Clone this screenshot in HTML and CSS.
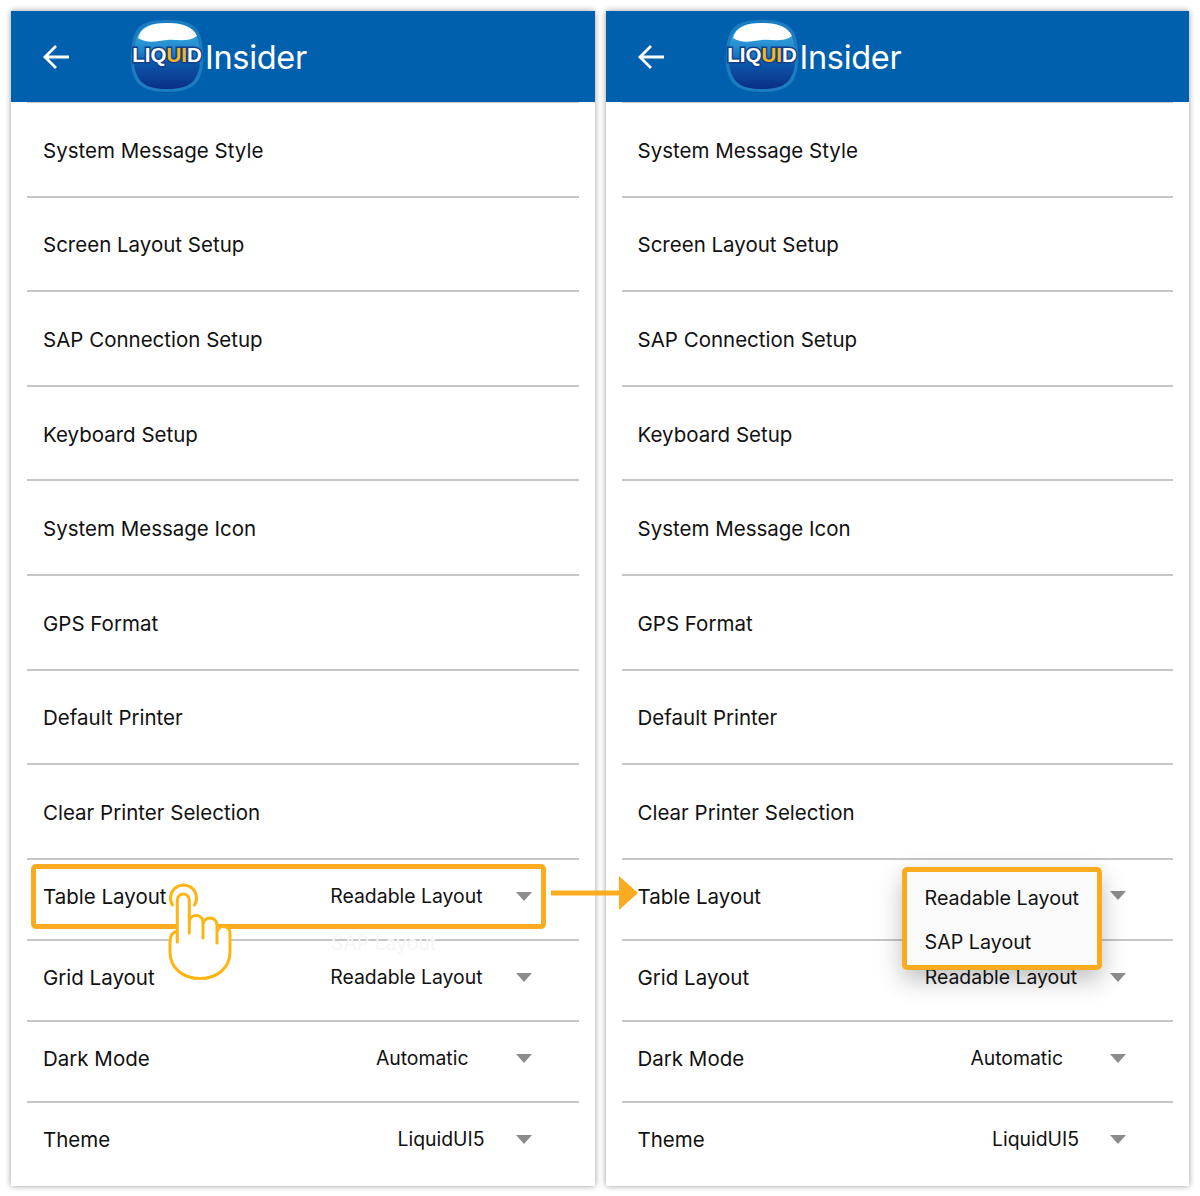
FILE: index.html
```html
<!DOCTYPE html>
<html lang="en">
<head>
  <meta charset="UTF-8">
  <meta name="viewport" content="width=device-width, initial-scale=1.0">
  <title>Liquid Insider Settings</title>
  <link rel="stylesheet" href="styles.css">
</head>
<body>
  <svg class="defs" width="0" height="0">
    <defs>
      <linearGradient id="blobFill" x1="0" y1="0" x2="0" y2="1">
        <stop offset="0" stop-color="#45b4e6"/>
        <stop offset="0.42" stop-color="#1e86cc"/>
        <stop offset="0.62" stop-color="#0c56a8"/>
        <stop offset="1" stop-color="#0a2f86"/>
      </linearGradient>
      <symbol id="logo" viewBox="0 0 76 74">
        <path d="M38 1C60 1 70 6 73 24C75 38 75 50 70 60C65 70 52 73 38 73C24 73 11 70 6 60C1 50 1 38 3 24C6 6 16 1 38 1Z" fill="#1b7cc0"/>
        <path d="M38 4C58 4 67 9 70 25C72 38 72 49 67 58C62 68 51 70 38 70C25 70 14 68 9 58C4 49 4 38 6 25C9 9 18 4 38 4Z" fill="url(#blobFill)"/>
        <path d="M9 19C12 8 22 4 38 4C54 4 64 8 68 17C58 24 48 20 38 21C28 22 18 25 9 19Z" fill="#fff"/>
        <text class="logo-text" x="38" y="43" text-anchor="middle">LIQ<tspan class="logo-ui">UI</tspan>D</text>
      </symbol>
      <symbol id="caret" viewBox="0 0 16 9">
        <path d="M0 0H16L8 9Z" fill="#8c8c8c"/>
      </symbol>
      <symbol id="back" viewBox="0 0 28 26">
        <path d="M26 13H3M13 2L2 13L13 24" fill="none" stroke="#fff" stroke-width="2.8"/>
      </symbol>
    </defs>
  </svg>

  <main class="page">
    <section class="screen">
      <header class="topbar">
        <svg class="back"><use href="#back"/></svg>
        <svg class="logo"><use href="#logo"/></svg>
        <span class="brand">Insider</span>
      </header>
      <ul class="menu">
        <li class="row">System Message Style</li>
        <li class="row">Screen Layout Setup</li>
        <li class="row">SAP Connection Setup</li>
        <li class="row">Keyboard Setup</li>
        <li class="row">System Message Icon</li>
        <li class="row">GPS Format</li>
        <li class="row">Default Printer</li>
        <li class="row">Clear Printer Selection</li>
        <li class="row row-select"><span>Table Layout</span><span class="value val-layout">Readable Layout</span><svg class="caret"><use href="#caret"/></svg></li>
        <li class="row row-select"><span>Grid Layout</span><span class="value val-layout">Readable Layout</span><svg class="caret"><use href="#caret"/></svg></li>
        <li class="row row-select"><span>Dark Mode</span><span class="value val-auto">Automatic</span><svg class="caret"><use href="#caret"/></svg></li>
        <li class="row row-select"><span>Theme</span><span class="value val-theme">LiquidUI5</span><svg class="caret"><use href="#caret"/></svg></li>
      </ul>
      <div class="highlight-row"></div>
      <div class="ghost-option">SAP Layout</div>
      <svg class="hand" viewBox="0 0 72 106">
        <path class="hand-ring" d="M7.500 25A13 13 0 1 1 29.500 25"/>
        <path class="hand-body" d="M12.300 51V20A6 6 0 0 1 24.300 20V53V41A7 7 0 0 1 38 41V58V45A7 7 0 0 1 52 45V63V53A6.500 6.500 0 0 1 65 53V72C65 88 52 98.500 35 98.500C18 98.500 5 88 5 72V62C5 56 8 52 12.300 51V62"/>
      </svg>
    </section>

    <section class="screen">
      <header class="topbar">
        <svg class="back"><use href="#back"/></svg>
        <svg class="logo"><use href="#logo"/></svg>
        <span class="brand">Insider</span>
      </header>
      <ul class="menu">
        <li class="row">System Message Style</li>
        <li class="row">Screen Layout Setup</li>
        <li class="row">SAP Connection Setup</li>
        <li class="row">Keyboard Setup</li>
        <li class="row">System Message Icon</li>
        <li class="row">GPS Format</li>
        <li class="row">Default Printer</li>
        <li class="row">Clear Printer Selection</li>
        <li class="row row-select"><span>Table Layout</span></li>
        <li class="row row-select"><span>Grid Layout</span><span class="value val-layout">Readable Layout</span><svg class="caret"><use href="#caret"/></svg></li>
        <li class="row row-select"><span>Dark Mode</span><span class="value val-auto">Automatic</span><svg class="caret"><use href="#caret"/></svg></li>
        <li class="row row-select"><span>Theme</span><span class="value val-theme">LiquidUI5</span><svg class="caret"><use href="#caret"/></svg></li>
      </ul>
      <svg class="caret caret-open"><use href="#caret"/></svg>
      <div class="dropdown">
        <div class="option">Readable Layout</div>
        <div class="option">SAP Layout</div>
      </div>
    </section>

    <svg class="arrow" viewBox="0 0 88 34">
      <path d="M0 14.500H68V0L87 17L68 34V19.500H0Z" fill="#fbab1f"/>
    </svg>
  </main>
</body>
</html>
```

FILE: styles.css
```css
* {
  box-sizing: border-box;
}

body {
  margin: 0;
  background: #fff;
  color: #111;
  font-family: Inter, "Liberation Sans", sans-serif;
}

.defs {
  position: absolute;
}

.page {
  position: relative;
  display: flex;
  gap: 11px;
  width: 1200px;
  height: 1196px;
  padding: 11px;
}

.screen {
  position: relative;
  width: 584px;
  height: 1175px;
  background: #fff;
  box-shadow: 0 0 6px rgba(0, 0, 0, 0.4);
}

.topbar {
  display: flex;
  align-items: center;
  height: 91px;
  padding-left: 32px;
  background: #0060ae;
  color: #fff;
}

.back {
  width: 28px;
  height: 26px;
}

.logo {
  width: 76px;
  height: 74px;
  margin-left: 58px;
  margin-top: -2px;
}

.logo-text {
  font-family: "Liberation Sans", sans-serif;
  font-size: 20.500px;
  font-weight: 700;
  fill: #fff;
  stroke: #12408c;
  stroke-width: 3px;
  paint-order: stroke;
}

.logo-ui {
  fill: #f7b718;
}

.brand {
  margin-top: 2px;
  font-size: 32.500px;
  font-weight: 400;
  letter-spacing: -0.3px;
}

.menu {
  margin: 0;
  padding: 0;
  list-style: none;
}

.menu::before {
  content: "";
  display: block;
  height: 1px;
  margin: 0 16px;
  background: #c6c6c6;
}

.row {
  display: flex;
  align-items: center;
  height: 94.600px;
  margin: 0 16px;
  padding-left: 16px;
  padding-top: 2px;
  border-bottom: 2px solid #c6c6c6;
  font-size: 20.500px;
}

.row-select {
  height: 81px;
  padding-top: 0;
  padding-bottom: 6px;
}

.row-select:last-child {
  padding-bottom: 8px;
  border-bottom: none;
}

.value {
  margin-left: auto;
  font-size: 19.400px;
}

.val-layout {
  margin-right: 33px;
}

.val-auto {
  margin-right: 47px;
}

.val-theme {
  margin-right: 31px;
}

.caret {
  width: 16px;
  height: 9px;
  margin-right: 47px;
  flex-shrink: 0;
}

.caret-open {
  position: absolute;
  left: 504px;
  top: 880px;
}

.highlight-row {
  position: absolute;
  left: 20px;
  top: 853px;
  width: 515px;
  height: 65px;
  border: 5px solid #fbab1f;
  border-radius: 5px;
}

.ghost-option {
  position: absolute;
  left: 320px;
  top: 920px;
  font-size: 19.400px;
  color: #f6f6f6;
}

.hand {
  position: absolute;
  left: 154px;
  top: 869px;
  width: 72px;
  height: 106px;
}

.hand-ring,
.hand-body {
  stroke: #fdb515;
  stroke-width: 3px;
  stroke-linecap: round;
  stroke-linejoin: round;
}

.hand-ring {
  fill: none;
}

.hand-body {
  fill: #fff;
}

.dropdown {
  position: absolute;
  left: 296px;
  top: 856px;
  width: 200px;
  height: 103px;
  padding: 4px 0 0 18px;
  background: #fafafa;
  border: 5px solid #fbab1f;
  border-radius: 5px;
  box-shadow: 0 10px 24px rgba(0, 0, 0, 0.25);
  font-size: 19.700px;
}

.option {
  height: 44px;
  line-height: 44px;
  white-space: nowrap;
}

.arrow {
  position: absolute;
  left: 551px;
  top: 876px;
  width: 88px;
  height: 34px;
}
```
